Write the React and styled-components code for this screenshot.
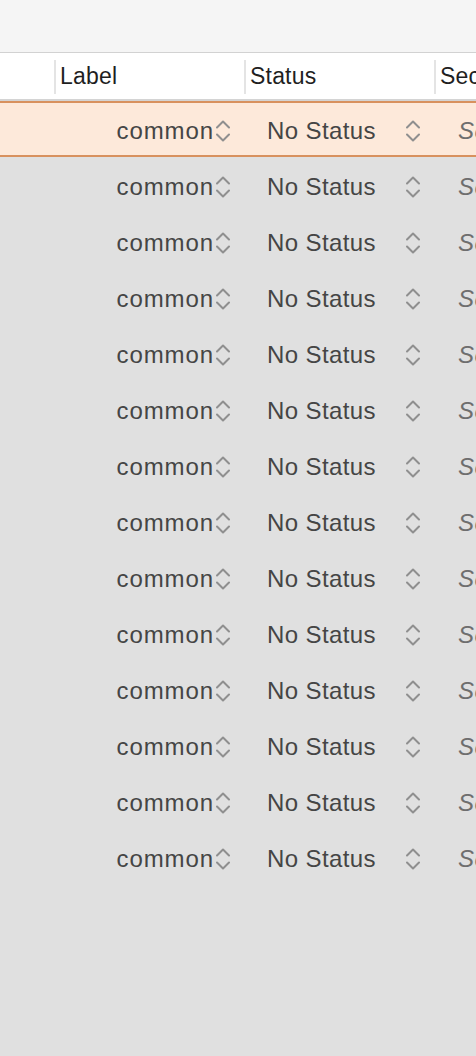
import React from 'react';
import styled, { createGlobalStyle } from 'styled-components';

const Global = createGlobalStyle`
  html, body {
    margin: 0;
    padding: 0;
    background: #e0e0e0;
    overflow: hidden;
  }
  body {
    font-family: "Liberation Sans", Arial, sans-serif;
  }
`;

const Page = styled.div`
  width: 476px;
  min-height: 1056px;
  overflow: hidden;
  background: #e0e0e0;
`;

const TopBar = styled.div`
  height: 52px;
  background: #f5f5f5;
  border-bottom: 1px solid #d2d2d2;
`;

const cols = '55px 190px 190px 300px';

const Header = styled.div`
  display: grid;
  grid-template-columns: ${cols};
  height: 46px;
  background: #ffffff;
  border-bottom: 2px solid #d4d4d4;
`;

const HeadCell = styled.div`
  display: flex;
  align-items: center;
  padding-left: 5px;
  font-size: 23px;
  letter-spacing: 0.2px;
  color: #1f1f1f;
  position: relative;
  white-space: nowrap;
  &::before {
    content: '';
    position: absolute;
    left: -1px;
    top: 7px;
    bottom: 5px;
    width: 2px;
    background: ${p => (p.$first ? 'transparent' : '#e4e4e4')};
  }
`;

const Row = styled.div`
  display: grid;
  grid-template-columns: ${cols};
  height: 56px;
  box-sizing: border-box;
  background: ${p => (p.$selected ? '#fde9da' : '#e0e0e0')};
  border-top: 2px solid ${p => (p.$selected ? '#d8915e' : 'transparent')};
  border-bottom: 2px solid ${p => (p.$selected ? '#d8915e' : 'transparent')};
  font-size: 24px;
  letter-spacing: 0.4px;
  color: #454545;
`;

const Cell = styled.div`
  display: flex;
  align-items: center;
  justify-content: ${p => p.$justify || 'flex-start'};
  padding: 4px ${p => p.$pr || 0}px 0 ${p => p.$pl || 0}px;
  gap: ${p => p.$gap || 0}px;
  white-space: nowrap;
  overflow: hidden;
`;

const Word = styled.span`
  letter-spacing: ${p => p.$ls || 0.4}px;
`;

const Italic = styled.span`
  font-style: italic;
  color: #6e6e6e;
`;

const Chevron = () => (
  <svg width="14" height="26" viewBox="0 0 14 26" fill="none">
    <polyline points="1,9.5 7,3.5 13,9.5" stroke="#8f8f8f" strokeWidth="2" strokeLinecap="round" strokeLinejoin="round" />
    <polyline points="1,16.5 7,22.5 13,16.5" stroke="#8f8f8f" strokeWidth="2" strokeLinecap="round" strokeLinejoin="round" />
  </svg>
);

const rows = Array.from({ length: 14 }, (_, i) => i);

export default function App() {
  return (
    <Page>
      <Global />
      <TopBar />
      <Header>
        <HeadCell $first />
        <HeadCell>Label</HeadCell>
        <HeadCell>Status</HeadCell>
        <HeadCell>Section</HeadCell>
      </Header>
      {rows.map(i => (
        <Row key={i} $selected={i === 0}>
          <Cell />
          <Cell $justify="flex-end" $pr={15} $gap={2}>
            <Word $ls={0.9}>common</Word>
            <Chevron />
          </Cell>
          <Cell $justify="space-between" $pl={22} $pr={15}>
            <Word>No Status</Word>
            <Chevron />
          </Cell>
          <Cell $pl={23}>
            <Italic>Select</Italic>
          </Cell>
        </Row>
      ))}
    </Page>
  );
}
